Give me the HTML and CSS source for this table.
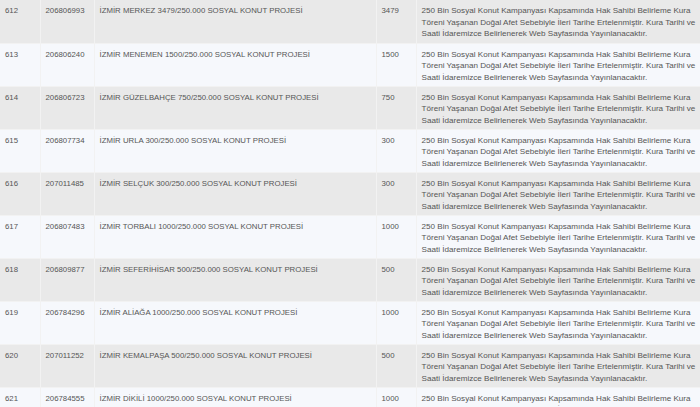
FILE: index.html
```html
<!DOCTYPE html>
<html lang="tr">
<head>
<meta charset="utf-8">
<link rel="stylesheet" href="styles.css">
</head>
<body>
<table class="list">
<colgroup><col class="c1"><col class="c2"><col class="c3"><col class="c4"><col class="c5"></colgroup>
<tbody>
<tr class="odd"><td>612</td><td>206806993</td><td>İZMİR MERKEZ 3479/250.000 SOSYAL KONUT PROJESİ</td><td>3479</td><td class="note">250 Bin Sosyal Konut Kampanyası Kapsamında Hak Sahibi Belirleme Kura Töreni Yaşanan Doğal Afet Sebebiyle İleri Tarihe Ertelenmiştir. Kura Tarihi ve Saati İdaremizce Belirlenerek Web Sayfasında Yayınlanacaktır.</td></tr>
<tr class="even"><td>613</td><td>206806240</td><td>İZMİR MENEMEN 1500/250.000 SOSYAL KONUT PROJESİ</td><td>1500</td><td class="note">250 Bin Sosyal Konut Kampanyası Kapsamında Hak Sahibi Belirleme Kura Töreni Yaşanan Doğal Afet Sebebiyle İleri Tarihe Ertelenmiştir. Kura Tarihi ve Saati İdaremizce Belirlenerek Web Sayfasında Yayınlanacaktır.</td></tr>
<tr class="odd"><td>614</td><td>206806723</td><td>İZMİR GÜZELBAHÇE 750/250.000 SOSYAL KONUT PROJESİ</td><td>750</td><td class="note">250 Bin Sosyal Konut Kampanyası Kapsamında Hak Sahibi Belirleme Kura Töreni Yaşanan Doğal Afet Sebebiyle İleri Tarihe Ertelenmiştir. Kura Tarihi ve Saati İdaremizce Belirlenerek Web Sayfasında Yayınlanacaktır.</td></tr>
<tr class="even"><td>615</td><td>206807734</td><td>İZMİR URLA 300/250.000 SOSYAL KONUT PROJESİ</td><td>300</td><td class="note">250 Bin Sosyal Konut Kampanyası Kapsamında Hak Sahibi Belirleme Kura Töreni Yaşanan Doğal Afet Sebebiyle İleri Tarihe Ertelenmiştir. Kura Tarihi ve Saati İdaremizce Belirlenerek Web Sayfasında Yayınlanacaktır.</td></tr>
<tr class="odd"><td>616</td><td>207011485</td><td>İZMİR SELÇUK 300/250.000 SOSYAL KONUT PROJESİ</td><td>300</td><td class="note">250 Bin Sosyal Konut Kampanyası Kapsamında Hak Sahibi Belirleme Kura Töreni Yaşanan Doğal Afet Sebebiyle İleri Tarihe Ertelenmiştir. Kura Tarihi ve Saati İdaremizce Belirlenerek Web Sayfasında Yayınlanacaktır.</td></tr>
<tr class="even"><td>617</td><td>206807483</td><td>İZMİR TORBALI 1000/250.000 SOSYAL KONUT PROJESİ</td><td>1000</td><td class="note">250 Bin Sosyal Konut Kampanyası Kapsamında Hak Sahibi Belirleme Kura Töreni Yaşanan Doğal Afet Sebebiyle İleri Tarihe Ertelenmiştir. Kura Tarihi ve Saati İdaremizce Belirlenerek Web Sayfasında Yayınlanacaktır.</td></tr>
<tr class="odd"><td>618</td><td>206809877</td><td>İZMİR SEFERİHİSAR 500/250.000 SOSYAL KONUT PROJESİ</td><td>500</td><td class="note">250 Bin Sosyal Konut Kampanyası Kapsamında Hak Sahibi Belirleme Kura Töreni Yaşanan Doğal Afet Sebebiyle İleri Tarihe Ertelenmiştir. Kura Tarihi ve Saati İdaremizce Belirlenerek Web Sayfasında Yayınlanacaktır.</td></tr>
<tr class="even"><td>619</td><td>206784296</td><td>İZMİR ALİAĞA 1000/250.000 SOSYAL KONUT PROJESİ</td><td>1000</td><td class="note">250 Bin Sosyal Konut Kampanyası Kapsamında Hak Sahibi Belirleme Kura Töreni Yaşanan Doğal Afet Sebebiyle İleri Tarihe Ertelenmiştir. Kura Tarihi ve Saati İdaremizce Belirlenerek Web Sayfasında Yayınlanacaktır.</td></tr>
<tr class="odd"><td>620</td><td>207011252</td><td>İZMİR KEMALPAŞA 500/250.000 SOSYAL KONUT PROJESİ</td><td>500</td><td class="note">250 Bin Sosyal Konut Kampanyası Kapsamında Hak Sahibi Belirleme Kura Töreni Yaşanan Doğal Afet Sebebiyle İleri Tarihe Ertelenmiştir. Kura Tarihi ve Saati İdaremizce Belirlenerek Web Sayfasında Yayınlanacaktır.</td></tr>
<tr class="even"><td>621</td><td>206784555</td><td>İZMİR DİKİLİ 1000/250.000 SOSYAL KONUT PROJESİ</td><td>1000</td><td class="note">250 Bin Sosyal Konut Kampanyası Kapsamında Hak Sahibi Belirleme Kura Töreni Yaşanan Doğal Afet Sebebiyle İleri Tarihe Ertelenmiştir. Kura Tarihi ve Saati İdaremizce Belirlenerek Web Sayfasında Yayınlanacaktır.</td></tr>
</tbody>
</table>
</body>
</html>
```
FILE: styles.css
```css
html, body {
  margin: 0;
  padding: 0;
  overflow: hidden;
  background: #ffffff;
}
.list {
  width: 712px;
  border-collapse: collapse;
  table-layout: fixed;
  font-family: "Liberation Sans", Arial, sans-serif;
  font-size: 7.8px;
  line-height: 11.5px;
  color: #555555;
}
.c1 { width: 40px; }
.c2 { width: 54px; }
.c3 { width: 282px; }
.c4 { width: 40px; }
.c5 { width: 296px; }
.list td {
  height: 43px;
  box-sizing: border-box;
  padding: 5px 5px 2px 5px;
  vertical-align: top;
  border-left: 1px solid #f2f2f2;
  border-bottom: 1px solid #f2f2f2;
}
.list td:first-child { border-left: none; }
.list td.note {
  font-size: 8.1px;
}
.odd td { background: #e9e9e9; }
.even td { background: #f6f8fc; }
```
